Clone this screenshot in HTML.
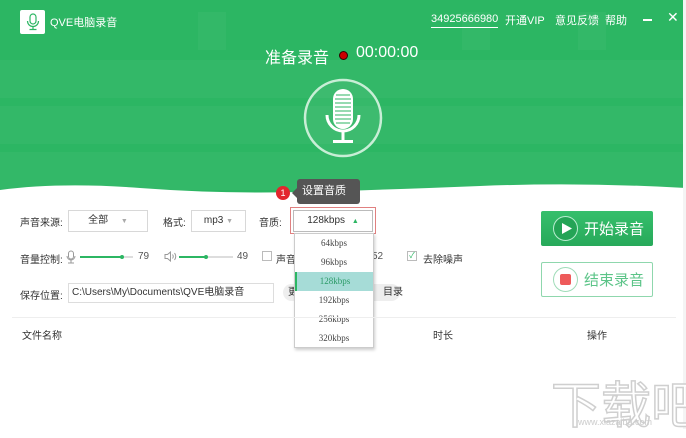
<!DOCTYPE html>
<html><head><meta charset="utf-8"><style>
*{margin:0;padding:0;box-sizing:border-box}
body{width:686px;height:429px;overflow:hidden;background:#fff;font-family:"Liberation Sans","Noto Sans CJK SC",sans-serif;position:relative;font-size:10px;color:#333}
.a{position:absolute;white-space:nowrap}
.g{position:absolute;left:0;top:0;width:686px;height:200px;background:#2cb663;overflow:hidden}
.sq{position:absolute;background:rgba(255,255,255,0.035)}
.sel{position:absolute;border:1px solid #d8d8d8;background:#fff;height:22px;font-size:10px;line-height:20px;text-align:center;color:#333}
.dd div{height:19px;line-height:19px;text-align:center;font-family:"Liberation Serif","DejaVu Serif",serif;font-size:9px;color:#444}
</style></head><body>
<div class="g">
 <div class="sq" style="left:198px;top:12px;width:28px;height:38px"></div>
 <div class="sq" style="left:0;top:60px;width:686px;height:38px"></div>
 <div class="sq" style="left:0;top:106px;width:686px;height:38px"></div>
 <div class="sq" style="left:0;top:152px;width:686px;height:38px"></div>
 <div class="sq" style="left:462px;top:12px;width:28px;height:38px"></div>
 <div class="sq" style="left:578px;top:12px;width:28px;height:38px"></div>
</div>
<svg class="a" style="left:0;top:178px" width="686" height="30"><path d="M0 12 Q60 4 140 10 T300 14 T480 8 T686 10 L686 30 L0 30Z" fill="#fff"/></svg>
<div class="a" style="left:0;top:198px;width:686px;height:231px;background:#fff"></div>
<div class="a" style="left:683px;top:0;width:3px;height:429px;background:#f4f4f4"></div>
<div class="a" style="left:20px;top:10px;width:25px;height:24px;background:#fff;border-radius:2px"></div>
<svg class="a" style="left:26px;top:13px" width="14" height="18"><rect x="4" y="1" width="6" height="10" rx="3" fill="none" stroke="#2cb663" stroke-width="1.2"/><path d="M1.5 8 a5.5 5.5 0 0 0 11 0 M7 13.5 V16 M3.5 16.5 H10.5" fill="none" stroke="#2cb663" stroke-width="1.2"/></svg>
<div class="a" style="left:50px;top:14px;color:#fff;font-size:11px">QVE电脑录音</div>
<div class="a" style="left:431px;top:12px;color:#fff;font-size:11px;border-bottom:1px solid #fff;line-height:15px">34925666980</div>
<div class="a" style="left:505px;top:12px;color:#fff;font-size:11px">开通VIP</div>
<div class="a" style="left:555px;top:12px;color:#fff;font-size:11px">意见反馈</div>
<div class="a" style="left:605px;top:12px;color:#fff;font-size:11px">帮助</div>
<div class="a" style="left:643px;top:19px;width:9px;height:1.5px;background:#fff"></div>
<div class="a" style="left:667px;top:9px;color:#fff;font-size:14px">✕</div>
<div class="a" style="left:265px;top:44px;color:#fff;font-size:16px">准备录音</div>
<div class="a" style="left:339px;top:51px;width:9px;height:9px;border-radius:50%;background:#c00;border:1.5px solid #300"></div>
<div class="a" style="left:356px;top:44px;color:#fff;font-size:16px">00:00:00</div>
<svg class="a" style="left:302px;top:77px" width="82" height="82"><circle cx="41" cy="41" r="38" fill="rgba(255,255,255,0.05)" stroke="#c8eed6" stroke-width="2.5"/><rect x="31" y="12" width="20" height="40" rx="10" fill="#fff"/><g stroke="#2cb663" stroke-width="1">
<line x1="34" y1="18" x2="48" y2="18"/><line x1="33" y1="22" x2="49" y2="22"/><line x1="33" y1="26" x2="49" y2="26"/><line x1="33" y1="30" x2="49" y2="30"/><line x1="33" y1="34" x2="49" y2="34"/><line x1="33" y1="38" x2="49" y2="38"/><line x1="33" y1="42" x2="49" y2="42"/><line x1="34" y1="46" x2="48" y2="46"/></g>
<path d="M25 38 a16 16 0 0 0 32 0" fill="none" stroke="#fff" stroke-width="3"/><rect x="39.5" y="54" width="3" height="10" fill="#fff"/><rect x="31" y="63" width="20" height="3" fill="#fff"/></svg>
<div class="a" style="left:276px;top:186px;width:14px;height:14px;border-radius:50%;background:#e3262d;color:#fff;font-size:9px;text-align:center;line-height:14px">1</div>
<div class="a" style="left:297px;top:179px;width:63px;height:25px;background:#555;border-radius:3px;color:#fff;font-size:11px;line-height:25px;padding-left:5px">设置音质</div>
<div class="a" style="left:292px;top:188px;border:5px solid transparent;border-right-color:#555;border-left:0"></div>
<div class="a" style="left:20px;top:214px">声音来源:</div>
<div class="sel" style="left:68px;top:210px;width:80px">全部 <span style="color:#aaa;font-size:7px;margin-left:10px">▼</span></div>
<div class="a" style="left:163px;top:214px">格式:</div>
<div class="sel" style="left:191px;top:210px;width:55px">mp3 <span style="color:#aaa;font-size:7px">▼</span></div>
<div class="a" style="left:259px;top:214px">音质:</div>
<div class="a" style="left:290px;top:207px;width:86px;height:27px;border:1px solid #e08080"></div>
<div class="sel" style="left:293px;top:210px;width:80px;border-color:#bbb">128kbps <span style="color:#2cb663;font-size:7px;margin-left:4px">▲</span></div>
<div class="a" style="left:20px;top:251px">音量控制:</div>
<svg class="a" style="left:66px;top:250px" width="10" height="14"><rect x="2.5" y="1" width="5" height="8" rx="2.5" fill="none" stroke="#999"/><path d="M1 6 a4 4 0 0 0 8 0 M5 10 V13 M2 13 H8" fill="none" stroke="#999"/></svg>
<div class="a" style="left:80px;top:256px;width:53px;height:2px;background:#ddd"></div>
<div class="a" style="left:80px;top:256px;width:42px;height:2px;background:#2cb663"></div>
<div class="a" style="left:120px;top:255px;width:4px;height:4px;border-radius:50%;background:#2cb663"></div>
<div class="a" style="left:138px;top:251px;color:#555">79</div>
<svg class="a" style="left:164px;top:251px" width="14" height="11"><path d="M1 3.5 H3.5 L6.5 1 V10 L3.5 7.5 H1Z" fill="none" stroke="#999"/><path d="M8.5 3.5 Q10 5.5 8.5 7.5 M10.5 2 Q13 5.5 10.5 9" fill="none" stroke="#999"/></svg>
<div class="a" style="left:179px;top:256px;width:54px;height:2px;background:#ddd"></div>
<div class="a" style="left:179px;top:256px;width:27px;height:2px;background:#2cb663"></div>
<div class="a" style="left:204px;top:255px;width:4px;height:4px;border-radius:50%;background:#2cb663"></div>
<div class="a" style="left:237px;top:251px;color:#555">49</div>
<div class="a" style="left:262px;top:251px;width:10px;height:10px;border:1px solid #bbb"></div>
<div class="a" style="left:276px;top:251px">声音</div>
<div class="a" style="left:372px;top:251px;color:#555">52</div>
<div class="a" style="left:407px;top:251px;width:10px;height:10px;border:1px solid #bbb;color:#2cb663;font-size:8px;line-height:8px;text-align:center">✓</div>
<div class="a" style="left:423px;top:251px">去除噪声</div>
<div class="a" style="left:20px;top:287px">保存位置:</div>
<div class="a" style="left:68px;top:283px;width:206px;height:20px;border:1px solid #ddd;line-height:18px;padding-left:3px;color:#333">C:\Users\My\Documents\QVE电脑录音</div>
<div class="a" style="left:283px;top:284px;width:117px;height:17px;background:#eee;border-radius:9px;line-height:17px;padding-left:5px">更改目录<span style="margin-left:55px">目录</span></div>
<div class="a dd" style="left:294px;top:233px;width:80px;height:115px;background:#fff;border:1px solid #ccc;box-shadow:1px 2px 3px rgba(0,0,0,0.2)">
<div>64kbps</div><div>96kbps</div><div style="background:#a6dcd7;border-left:2px solid #2cb663;color:#2a9a66">128kbps</div><div>192kbps</div><div>256kbps</div><div>320kbps</div></div>
<div class="a" style="left:541px;top:211px;width:112px;height:35px;background:linear-gradient(#36bf6c,#27a95a);border-radius:2px"></div>
<div class="a" style="left:553px;top:216px;width:25px;height:25px;border-radius:50%;border:1.5px solid #b9ecd0;background:#24a456"></div>
<svg class="a" style="left:561px;top:222px" width="12" height="13"><path d="M1 1 L11 6.5 L1 12Z" fill="#fff"/></svg>
<div class="a" style="left:584px;top:218px;color:#fff;font-size:15px">开始录音</div>
<div class="a" style="left:541px;top:262px;width:112px;height:35px;border:1px solid #8fd7ad;background:#fff;border-radius:2px"></div>
<div class="a" style="left:553px;top:267px;width:25px;height:25px;border-radius:50%;border:1.5px solid #9fdcb8"></div>
<div class="a" style="left:560px;top:274px;width:11px;height:11px;background:#ee5a5a;border-radius:2px"></div>
<div class="a" style="left:584px;top:269px;color:#5cc488;font-size:15px">结束录音</div>
<div class="a" style="left:12px;top:317px;width:664px;height:1px;background:#eee"></div>
<div class="a" style="left:22px;top:327px">文件名称</div>
<div class="a" style="left:433px;top:327px">时长</div>
<div class="a" style="left:587px;top:327px">操作</div>
<div class="a" style="left:551px;top:366px;color:#fff;font-size:50px;letter-spacing:0px;-webkit-text-stroke:1.5px #cfcfcf">下载吧</div>
<div class="a" style="left:578px;top:417px;color:#ccc;font-size:9px">www.xiazaiba.com</div>
</body></html>
